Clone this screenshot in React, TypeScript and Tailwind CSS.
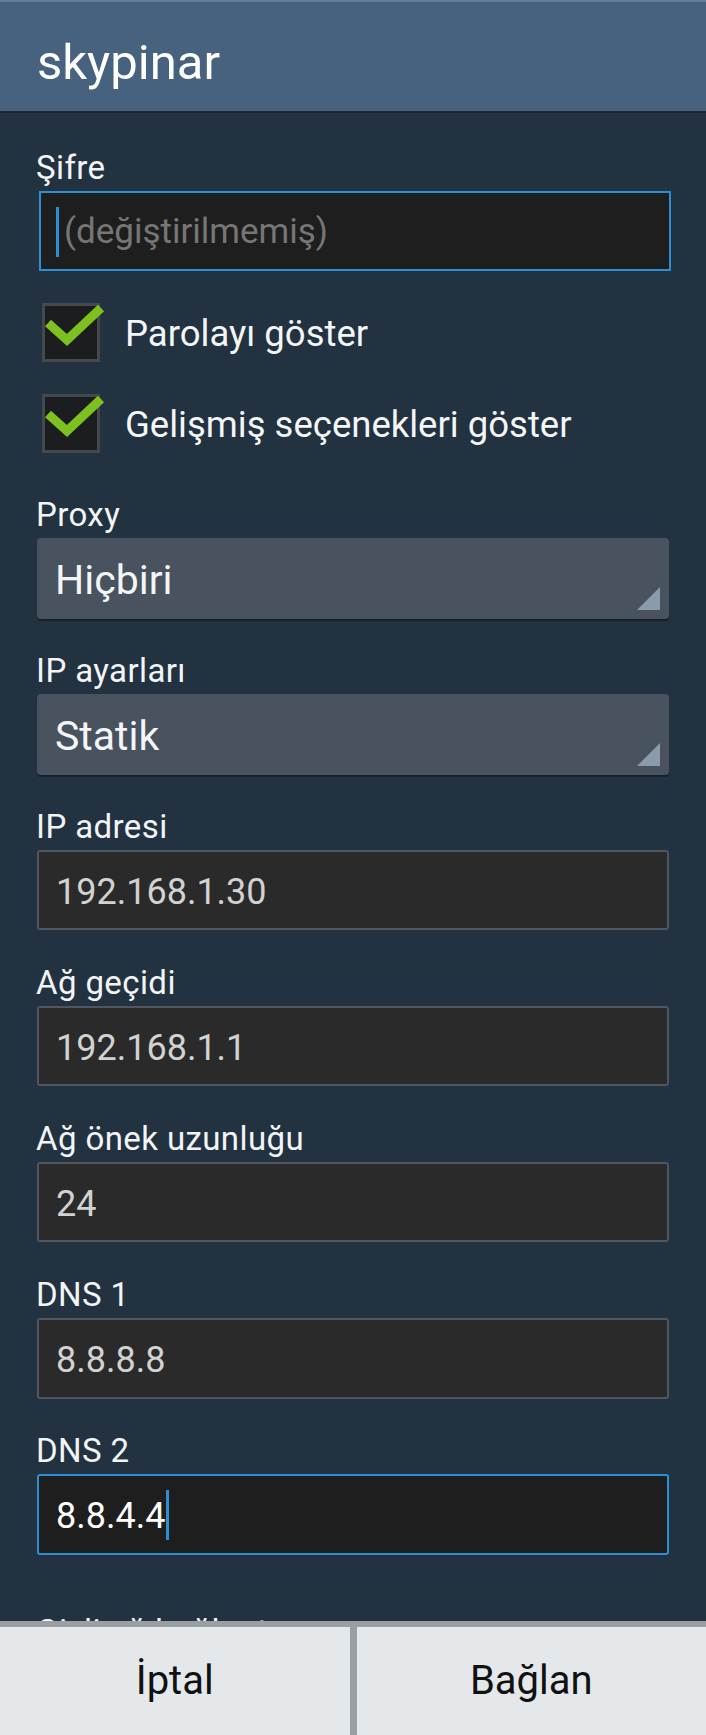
import React from "react";

const font = { fontFamily: "Roboto, 'Noto Sans', sans-serif" };

function Label({ text, mt }: { text: string; mt: string }) {
  return (
    <div className={`h-[42px] leading-[38px] text-[33px] tracking-[0.4px] text-[#f2f4f6] -ml-[1px] ${mt}`}>{text}</div>
  );
}

function Field({ value, h = "h-[80px]" }: { value: string; h?: string }) {
  return (
    <div
      className={`${h} rounded-[3px] border-2 border-[#4f565e] bg-[#2a2a2a] flex items-center pl-[17px] pt-[3px] text-[36px] text-[#d2d2d2]`}
    >
      {value}
    </div>
  );
}

function Spinner({ value }: { value: string }) {
  return (
    <div className="relative h-[81px] rounded-[4px] bg-[#48535f] shadow-[0_2px_0_#17212b] flex items-center pl-[18px] pt-[4px] text-[41px] text-[#f4f5f6]">
      {value}
      <svg className="absolute right-[9px] bottom-[9px]" width="23" height="23" viewBox="0 0 23 23">
        <polygon points="23,0 23,23 0,23" fill="#8a9bab" />
      </svg>
    </div>
  );
}

function CheckRow({ text }: { text: string }) {
  return (
    <div className="h-[91px] flex items-center">
      <div className="relative ml-[5px] w-[58px] h-[59px] border-[3px] border-[#45494d] bg-[#1b1d1f]">
        <svg className="absolute -left-[3px] -top-[3px] overflow-visible" width="58" height="59" viewBox="0 0 58 59">
          <polyline
            points="6,20 25,37 59,5"
            fill="none"
            stroke="#7cc11f"
            strokeWidth="9"
            strokeLinejoin="miter"
          />
        </svg>
      </div>
      <div className="ml-[25px] pt-[3px] text-[36.5px] text-[#f4f5f6]">{text}</div>
    </div>
  );
}

export default function App() {
  return (
    <div className="w-[706px] h-[1735px] flex flex-col bg-[#223241] overflow-hidden" style={font}>
      <div className="h-[113px] shrink-0 bg-[#46627f] border-t-2 border-[#617d98] border-b-2 border-b-[#1a2634] flex items-center pl-[37px] pt-[12px]">
        <span className="text-[49px] text-white">skypinar</span>
      </div>

      <div className="flex-1 overflow-hidden px-[37px]">
        <Label text="Şifre" mt="mt-[36px]" />
        <div className="ml-[2px] -mr-[2px] h-[80px] border-2 border-[#2b8fd4] bg-[#1e1e1e] flex items-center pl-[15px] pt-[2px]">
          <span className="w-[3px] h-[50px] bg-[#2b8fd4] mr-[5px]" />
          <span className="text-[35px] text-[#767676]">(değiştirilmemiş)</span>
        </div>

        <div className="mt-[16px]">
          <CheckRow text="Parolayı göster" />
          <CheckRow text="Gelişmiş seçenekleri göster" />
        </div>

        <Label text="Proxy" mt="mt-[27px]" />
        <Spinner value="Hiçbiri" />

        <Label text="IP ayarları" mt="mt-[33px]" />
        <Spinner value="Statik" />

        <Label text="IP adresi" mt="mt-[33px]" />
        <Field value="192.168.1.30" />

        <Label text="Ağ geçidi" mt="mt-[34px]" />
        <Field value="192.168.1.1" />

        <Label text="Ağ önek uzunluğu" mt="mt-[34px]" />
        <Field value="24" />

        <Label text="DNS 1" mt="mt-[34px]" />
        <Field value="8.8.8.8" h="h-[81px]" />

        <Label text="DNS 2" mt="mt-[33px]" />
        <div className="h-[81px] rounded-[3px] border-2 border-[#2b8fd4] bg-[#1e1e1e] flex items-center pl-[17px] pt-[3px] text-[36px] text-white">
          <span>8.8.4.4</span>
          <span className="w-[3px] h-[50px] bg-[#2b8fd4] ml-[1px] -mt-[3px]" />
        </div>

        <Label text="Gizli ağ bağlantısı" mt="mt-[58px]" />
      </div>

      <div className="h-[114px] shrink-0 bg-[#9a9fa4] pt-[6px] grid grid-cols-2 gap-[7px]">
        <button className="bg-[#e4e8eb] flex items-center justify-center text-[40px] text-[#111]">İptal</button>
        <button className="bg-[#e4e8eb] flex items-center justify-center text-[40px] text-[#111]">Bağlan</button>
      </div>
    </div>
  );
}
